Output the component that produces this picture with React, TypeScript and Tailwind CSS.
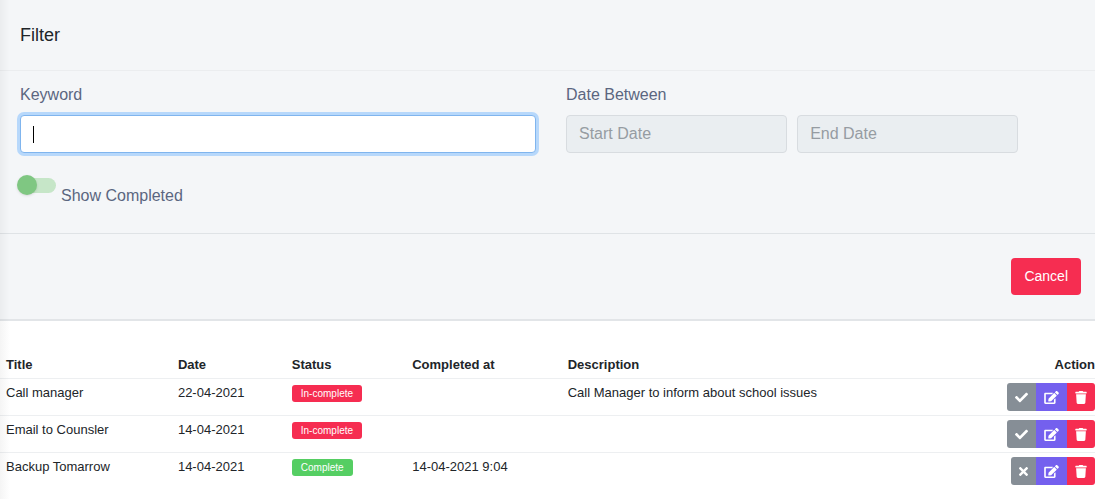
import React, { useState } from 'react';
import { FaCheck, FaEdit, FaTimes, FaTrash } from 'react-icons/fa';
import clsx from 'clsx';

interface Task {
    id: number;
    title: string;
    date: string;
    completed: boolean;
    completedAt: string;
    description: string;
}

const tasks: Task[] = [
    { id: 1, title: 'Call manager', date: '22-04-2021', completed: false, completedAt: '', description: 'Call Manager to inform about school issues' },
    { id: 2, title: 'Email to Counsler', date: '14-04-2021', completed: false, completedAt: '', description: '' },
    { id: 3, title: 'Backup Tomarrow', date: '14-04-2021', completed: true, completedAt: '14-04-2021 9:04', description: '' },
];

const dateInput =
    'h-[38px] w-3/7 rounded border border-[#d8dce0] bg-[#eaeef1] px-3 text-base text-[#495057] placeholder:text-[#969ca2] focus:outline-none';

const FilterPanel: React.FC = () => {
    const [keyword, setKeyword] = useState('');
    const [focused, setFocused] = useState(true);
    const [showCompleted, setShowCompleted] = useState(false);

    const emptyCaret = focused && keyword === '';

    return (
        <form className="border-b-2 border-[#e2e5e8] bg-[#f4f6f8]" onSubmit={(e) => e.preventDefault()}>
            <div className="border-b border-[#ebedef] px-5 pt-[21px] pb-[21px]">
                <h4 className="text-lg leading-7 text-[#212529]">Filter</h4>
            </div>

            <div className="grid grid-cols-2 gap-x-[30px] pt-3 pr-[13px] pb-[25px] pl-5 text-base text-[#5b6680]">
                <div>
                    <label htmlFor="keyword" className="mb-2 block">Keyword</label>
                    <div className="relative">
                        <input
                            id="keyword"
                            type="text"
                            autoFocus
                            value={keyword}
                            onChange={(e) => setKeyword(e.target.value)}
                            onFocus={() => setFocused(true)}
                            onBlur={() => setFocused(false)}
                            className={clsx(
                                'block h-[38px] w-full rounded border bg-white px-3 text-[#495057] focus:outline-none',
                                focused ? 'border-[#80b5ee] ring-3 ring-[#b7d8fb]' : 'border-[#d8dce0]',
                                emptyCaret && 'caret-transparent'
                            )}
                        />
                        {/* Steady caret while the box is empty */}
                        {emptyCaret && (
                            <span className="pointer-events-none absolute top-[11px] left-[13px] h-[17px] w-px bg-black" />
                        )}
                    </div>

                    {/* Toggle switch, knob overhangs the track */}
                    <label className="mt-[25px] flex h-[30px] cursor-pointer gap-[5px]">
                        <input
                            type="checkbox"
                            checked={showCompleted}
                            onChange={(e) => setShowCompleted(e.target.checked)}
                            className="peer sr-only"
                        />
                        <span className="relative h-[15px] w-9 rounded-full bg-[#c6e6c8] peer-checked:*:left-5">
                            <span className="absolute -top-[3px] -left-[3px] size-5 rounded-full bg-[#7fc782] shadow-sm transition-all" />
                        </span>
                        <span className="self-end leading-6">Show Completed</span>
                    </label>
                </div>

                <fieldset>
                    <legend className="mb-2">Date Between</legend>
                    <div className="flex gap-2.5">
                        <input type="text" readOnly aria-label="Start Date" placeholder="Start Date" className={dateInput} />
                        <input type="text" readOnly aria-label="End Date" placeholder="End Date" className={dateInput} />
                    </div>
                </fieldset>
            </div>

            <div className="flex justify-end border-t border-[#dfe3e6] px-3.5 py-6">
                <button type="button" className="rounded bg-[#f62d51] px-[13px] py-2 text-sm leading-[21px] text-white">
                    Cancel
                </button>
            </div>
        </form>
    );
};

const TaskRow: React.FC<{ task: Task }> = ({ task }) => (
    <tr className="border-t border-[#edeff1] align-top">
        <td className="px-1.5 py-1">{task.title}</td>
        <td className="px-1.5 py-1">{task.date}</td>
        <td className="px-1.5 py-1.5">
            <span
                className={clsx(
                    'block w-fit rounded-[3px] px-[9px] text-[10px] leading-[17px] text-white',
                    task.completed ? 'bg-[#55ce63]' : 'bg-[#f62d51]'
                )}
            >
                {task.completed ? 'Complete' : 'In-complete'}
            </span>
        </td>
        <td className="px-1.5 py-1">{task.completedAt}</td>
        <td className="px-1.5 py-1">{task.description}</td>
        <td className="py-1">
            <div className="flex h-7 justify-end text-white">
                <button
                    type="button"
                    aria-label={task.completed ? 'Mark as incomplete' : 'Mark as complete'}
                    className="rounded-l-[3px] bg-[#868e96] px-2"
                >
                    {task.completed ? <FaTimes className="h-[13px] w-[9px]" /> : <FaCheck className="size-[13px]" />}
                </button>
                <button type="button" aria-label="Edit" className="bg-[#7460ee] px-2">
                    <FaEdit className="h-[13px] w-[15px]" />
                </button>
                <button type="button" aria-label="Delete" className="rounded-r-[3px] bg-[#f62d51] px-2">
                    <FaTrash className="h-[13px] w-3" />
                </button>
            </div>
        </td>
    </tr>
);

export default function App() {
    return (
        <div className="relative min-h-screen bg-white font-['Liberation_Sans',Arial,sans-serif]">
            <FilterPanel />

            <table className="mt-[30px] w-full table-fixed border-collapse text-[13px] leading-5 text-[#212529]">
                <thead>
                    <tr className="text-left">
                        <th className="w-[15.7%] px-1.5 pt-1 pb-[3px]">Title</th>
                        <th className="w-[10.4%] px-1.5 pt-1 pb-[3px]">Date</th>
                        <th className="w-[11%] px-1.5 pt-1 pb-[3px]">Status</th>
                        <th className="w-[14.2%] px-1.5 pt-1 pb-[3px]">Completed at</th>
                        <th className="px-1.5 pt-1 pb-[3px]">Description</th>
                        <th className="w-[10%] pt-1 pb-[3px] text-right">Action</th>
                    </tr>
                </thead>
                <tbody>
                    {tasks.map((task) => (
                        <TaskRow key={task.id} task={task} />
                    ))}
                </tbody>
            </table>

            <div className="pointer-events-none absolute inset-y-0 left-0 w-2.5 bg-linear-to-r from-black/4 to-transparent" />
        </div>
    );
}
